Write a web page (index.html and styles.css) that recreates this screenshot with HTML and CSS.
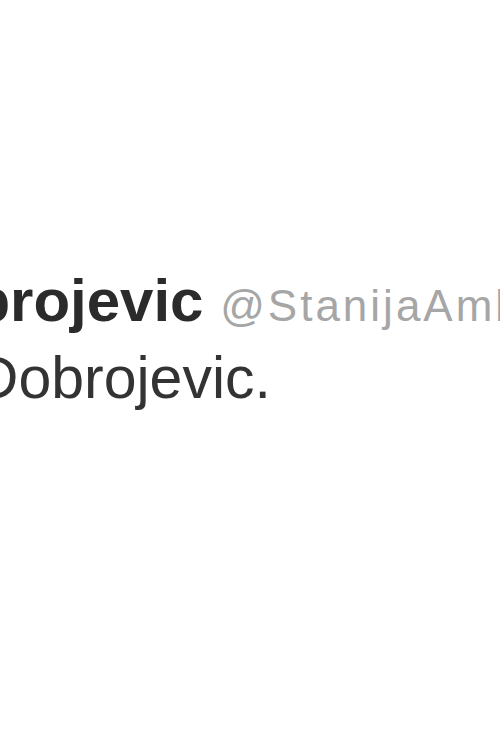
FILE: index.html
```html
<!DOCTYPE html>
<html>
<head>
    <meta charset="utf-8">
    <title>Tweet</title>
    <link rel="stylesheet" href="styles.css">
</head>
<body>
    <div class="tweet">
        <div class="tweet-header">
            <strong class="fullname">Stanija Dobrojevic</strong>
            <span class="username">@StanijaAmbrozic</span>
        </div>
        <p class="tweet-text">Stanija Dobrojevic.</p>
    </div>
</body>
</html>
```

FILE: styles.css
```css
html, body {
    margin: 0;
    padding: 0;
    background: #fff;
}
body {
    width: 500px;
    height: 750px;
    overflow: hidden;
    font-family: "Liberation Sans", Arial, sans-serif;
}
.tweet {
    padding-top: 271px;
}
.tweet-header {
    margin-left: -320px;
    white-space: nowrap;
    font-size: 60px;
    line-height: 60px;
}
.fullname {
    color: #2b2b2b;
    font-weight: bold;
}
.username {
    color: #a6a6a6;
    font-size: 44px;
    letter-spacing: 3px;
}
.tweet-text {
    margin: 13px 0 0 -221px;
    white-space: nowrap;
    color: #333;
    font-size: 59px;
    line-height: 59px;
}
```
